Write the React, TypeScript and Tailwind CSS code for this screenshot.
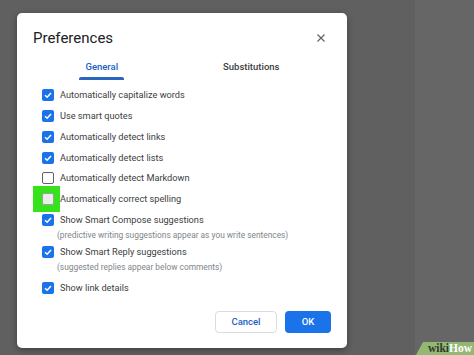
import React from "react";

const rows: { label: string; checked: boolean; sub?: string; subMb?: string; highlight?: boolean }[] = [
  { label: "Automatically capitalize words", checked: true },
  { label: "Use smart quotes", checked: true },
  { label: "Automatically detect links", checked: true },
  { label: "Automatically detect lists", checked: true },
  { label: "Automatically detect Markdown", checked: false },
  { label: "Automatically correct spelling", checked: false, highlight: true },
  {
    label: "Show Smart Compose suggestions",
    checked: true,
    sub: "(predictive writing suggestions appear as you write sentences)",
  },
  {
    label: "Show Smart Reply suggestions",
    checked: true,
    sub: "(suggested replies appear below comments)",
    subMb: "mb-[4px]",
  },
  { label: "Show link details", checked: true },
];

function Box({ checked, highlight }: { checked: boolean; highlight?: boolean }) {
  return (
    <div className="relative w-[12px] h-[12px] shrink-0">
      {highlight && (
        <div className="absolute left-[-9px] top-[-7px] w-[27px] h-[26px] bg-[#36e21c]" />
      )}
      {checked ? (
        <div className="relative w-[12px] h-[12px] rounded-[2px] bg-[#1a73e8] flex items-center justify-center">
          <svg width="10" height="10" viewBox="0 0 10 10">
            <path d="M2 5.2 L4.1 7.2 L8 2.9" fill="none" stroke="white" strokeWidth="1.5" />
          </svg>
        </div>
      ) : (
        <div
          className={
            "relative w-[12px] h-[12px] rounded-[2px] border-[1.5px] " +
            (highlight ? "border-[#9aa29a] bg-[#e8efe6]" : "border-[#5f6368] bg-white")
          }
        />
      )}
    </div>
  );
}

export default function App() {
  return (
    <div
      className="relative w-[474px] h-[355px] flex overflow-hidden"
      style={{ fontFamily: "Roboto, 'Liberation Sans', sans-serif" }}
    >
      <div className="w-[415px] h-full bg-[#606060] pl-[17px] pt-[13px]">
        <div className="w-[330px] h-[335px] bg-white rounded-[5px] shadow-[0_2px_6px_rgba(0,0,0,0.35)] flex flex-col pt-[15px] pl-[16px] pr-[16px]">
          <div className="flex items-center justify-between h-[20px]">
            <div className="text-[15px] leading-[20px] text-[#202124]">Preferences</div>
            <svg width="10" height="10" viewBox="0 0 10 10" className="mr-[5px]">
              <path d="M1.5 1.5 L8.5 8.5 M8.5 1.5 L1.5 8.5" stroke="#5f6368" strokeWidth="1.2" />
            </svg>
          </div>
          <div className="flex ml-[-6px] w-[299px] mt-[12px] h-[20px]">
            <div className="flex-1 flex flex-col items-center">
              <div className="text-[9.5px] leading-[14px] font-medium text-[#1a5fc4] px-[5px]">General</div>
              <div className="w-[45px] h-[2.5px] rounded-t-[2px] bg-[#2a66bd] mt-[3px]" />
            </div>
            <div className="flex-1 flex flex-col items-center">
              <div className="text-[9.5px] leading-[14px] font-medium text-[#3c4043]">Substitutions</div>
            </div>
          </div>
          <div className="flex flex-col mt-[5px] ml-[9px]">
            {rows.map((r, i) => (
              <div key={i} className="flex flex-col">
                <div className="flex items-center h-[20.75px] gap-[6px]">
                  <Box checked={r.checked} highlight={r.highlight} />
                  <span className="relative text-[9.2px] text-[#3c4043] whitespace-nowrap">{r.label}</span>
                </div>
                {r.sub && (
                  <div
                    className={
                      "h-[11.2px] leading-[11px] ml-[15px] text-[8.35px] text-[#80868b] whitespace-nowrap " +
                      (r.subMb ?? "")
                    }
                  >
                    {r.sub}
                  </div>
                )}
              </div>
            ))}
          </div>
          <div className="flex justify-end gap-[8px] mt-auto mb-[15px]">
            <div className="w-[62px] h-[22px] border border-[#dadce0] rounded-[4px] flex items-center justify-center text-[9.5px] font-medium text-[#1a5fc4]">
              Cancel
            </div>
            <div className="w-[46px] h-[22px] bg-[#1a73e8] rounded-[4px] flex items-center justify-center text-[9.5px] font-medium text-white">
              OK
            </div>
          </div>
        </div>
      </div>
      <div className="flex-1 h-full bg-[#656665]" />
      <div
        className="absolute right-0 bottom-0 w-[58px] h-[13px] bg-[#93b874] flex items-center justify-end pr-[2px]"
        style={{ clipPath: "polygon(7px 0, 100% 0, 100% 100%, 0 100%)" }}
      >
        <span
          className="text-[11.5px] leading-[13px] font-bold"
          style={{ fontFamily: "'Liberation Serif', 'DejaVu Serif', serif" }}
        >
          <span className="text-[#2f3a2a]">wiki</span>
          <span className="text-white">How</span>
        </span>
      </div>
    </div>
  );
}
